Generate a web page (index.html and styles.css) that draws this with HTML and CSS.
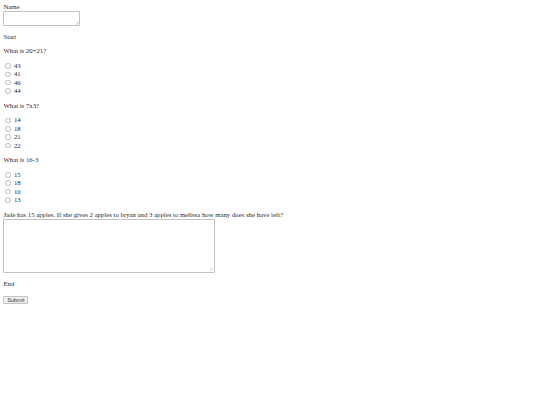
FILE: index.html
```html
<!DOCTYPE html>
<html>
<head>
<meta charset="utf-8">
<title>Quiz</title>
<link rel="stylesheet" href="styles.css">
</head>
<body class="page">
<form class="quiz">
<label class="field-label" for="name">Name</label>
<textarea class="name-box" id="name"></textarea>
<p class="section">Start</p>
<p class="question">What is 20+21?</p>
<div class="options">
<label class="option"><input type="radio" class="choice" name="q1"> 43</label>
<label class="option"><input type="radio" class="choice" name="q1"> 41</label>
<label class="option"><input type="radio" class="choice" name="q1"> 46</label>
<label class="option"><input type="radio" class="choice" name="q1"> 44</label>
</div>
<p class="question">What is 7x3?</p>
<div class="options">
<label class="option"><input type="radio" class="choice" name="q2"> 14</label>
<label class="option"><input type="radio" class="choice" name="q2"> 18</label>
<label class="option"><input type="radio" class="choice" name="q2"> 21</label>
<label class="option"><input type="radio" class="choice" name="q2"> 22</label>
</div>
<p class="question">What is 16-3</p>
<div class="options">
<label class="option"><input type="radio" class="choice" name="q3"> 15</label>
<label class="option"><input type="radio" class="choice" name="q3"> 18</label>
<label class="option"><input type="radio" class="choice" name="q3"> 10</label>
<label class="option"><input type="radio" class="choice" name="q3"> 13</label>
</div>
<p class="question open">Jade has 15 apples. If she gives 2 apples to bryan and 3 apples to melissa how many does she have left?</p>
<textarea class="answer-box"></textarea>
<p class="section end">End</p>
<button type="submit" class="submit">Submit</button>
</form>
</body>
</html>
```
FILE: styles.css
```css
.page {
  margin: 3.4px;
  font-family: "Liberation Serif", "Times New Roman", serif;
  font-size: 6.75px;
  line-height: 7.4px;
  color: #2a2a2a;
  background: #fff;
}
.quiz {
  display: flex;
  flex-direction: column;
  align-items: flex-start;
}
.field-label {
  display: block;
  height: 7.4px;
  line-height: 7.4px;
}
.name-box,
.answer-box {
  display: block;
  box-sizing: border-box;
  margin: 0.4px 0 0;
  padding: 1px;
  border: 1px solid #c2c2c2;
  border-radius: 1px;
  resize: none;
  background-color: #fff;
  background-image:
    linear-gradient(135deg, transparent 45%, #bdbdbd 45%, #bdbdbd 55%, transparent 55%),
    linear-gradient(135deg, transparent 45%, #bdbdbd 45%, #bdbdbd 55%, transparent 55%);
  background-repeat: no-repeat;
  background-size: 3px 3px, 1.6px 1.6px;
  background-position: right 0.5px bottom 0.5px, right 0.5px bottom 0.5px;
  font-family: "Liberation Mono", monospace;
  font-size: 5.6px;
}
.name-box {
  width: 77px;
  height: 15.2px;
}
.answer-box {
  width: 211.5px;
  height: 53.7px;
  margin-top: 1px;
}
.section,
.question {
  margin: 6.75px 0 0;
  line-height: 7.4px;
}
.question.open {
  margin-top: 6.75px;
}
.section.end {
  margin-top: 6.9px;
}
.options {
  display: flex;
  flex-direction: column;
  margin-top: 6.75px;
}
.option {
  display: flex;
  align-items: center;
  height: 8.4px;
  white-space: pre;
}
.choice {
  appearance: none;
  -webkit-appearance: none;
  box-sizing: border-box;
  width: 5.5px;
  height: 5.5px;
  margin: 0.6px 1.3px 0 2.1px;
  border: 0.8px solid #b9b9b9;
  border-radius: 50%;
  background: #fff;
}
.submit {
  box-sizing: border-box;
  margin-top: 9.2px;
  height: 8px;
  width: 25px;
  padding: 0;
  border: 1px solid #c4c4c4;
  border-radius: 1px;
  background: #f0f0f0;
  color: #333;
  font-family: "Liberation Sans", Arial, sans-serif;
  font-size: 5.6px;
  line-height: 6px;
}
```
